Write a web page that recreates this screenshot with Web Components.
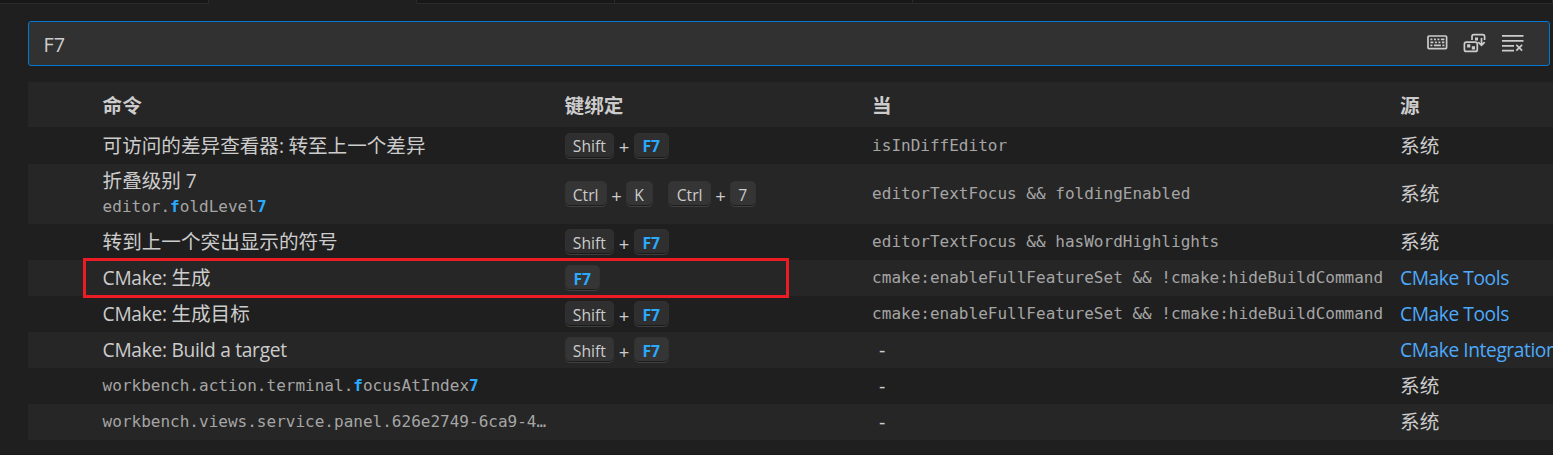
<!DOCTYPE html>
<html lang="zh-CN">
<head>
<meta charset="utf-8">
<title>键盘快捷方式</title>
<style>
html,body{margin:0;height:100%;overflow:hidden;background:#1f1f1f}
body{font-family:"Open Sans","Noto Sans CJK SC",sans-serif;font-size:19.6px;color:#ccc}
</style>
</head>
<body>
<keybindings-editor></keybindings-editor>
<script>
const define=(name,html,setup)=>{
  const t=document.createElement('template');t.innerHTML=html;
  customElements.define(name,class extends HTMLElement{
    constructor(){super();this.attachShadow({mode:'open'}).append(t.content.cloneNode(true));}
    connectedCallback(){if(setup)setup(this);}
  });
};

define('editor-tabs',`<style>
:host{display:flex;height:4px;box-sizing:border-box}
i{box-sizing:border-box;background:#181818;border-right:1px solid #2b2b2b;border-bottom:1px solid #2b2b2b}
.active{background:#1f1f1f;border-bottom-color:#1f1f1f}
</style><i style="width:209px"></i><i class="active" style="width:208px"></i><i style="width:198px"></i><i style="width:298px"></i><i style="flex:1"></i>`);

define('search-box',`<style>
:host{display:flex;align-items:center;box-sizing:border-box;height:45px;margin:17px 3px 16px 28px;padding:0 24.5px 0 14.5px;border:1px solid #0078d4;border-radius:3px;background:#313131}
.q{flex:1;font-size:19.8px;line-height:26px;padding-top:2px}
.actions{display:flex;gap:14px;margin-top:-2px}
svg{display:block;width:24px;height:24px;fill:none;stroke:#ccc;stroke-width:1.7}
</style><div class="q"><slot></slot></div><div class="actions">
<svg viewBox="0 0 24 24"><rect x="3" y="5" width="18.6" height="12.6" rx="1"/><path d="M5.4 8.3h2m1.5 0h2m1.5 0h2m1.5 0h3.5M5.4 11.3h3m1.5 0h2m1.5 0h2m1.5 0h2.5M5.4 14.3h2m1.5 0h7m1.5 0h2"/></svg>
<svg viewBox="0 0 24 24"><path d="M9 9V5.5q0-1.8 1.8-1.8h9q1.8 0 1.8 1.8V9M18.5 7v7.4m-3.2-3.2 3.2 3.2 3.2-3.2"/><rect x="1.4" y="11.2" width="12.9" height="9.2" rx="2"/><path fill="#ccc" stroke="none" d="M4.1 13.2h3.2v3.2H4.1zM8.8 15.2h3.2v3.2H8.8zM12 6.5h3v3h-3z"/></svg>
<svg viewBox="0 0 24 24"><path d="M1 4.8h21.5M1 9.8h21.5M1 14.8h12M1 19.6h12M15.3 13.9l5.8 5.8m0-5.8-5.8 5.8"/></svg>
</div>`);

define('key-cap',`<style>
:host{display:inline-flex;justify-content:center;align-items:center;box-sizing:border-box;height:26px;border:1px solid rgba(51,51,51,.6);border-bottom-color:rgba(68,68,68,.85);border-radius:5px;background:rgba(128,128,128,.17);box-shadow:inset 0 -1px 0 rgba(0,0,0,.45);font-size:16.5px;line-height:22px;color:#ccc}
:host([hit]){color:#2aaaff;font-weight:700}
span{transform:scaleX(.95);padding-top:1px}
</style><span><slot></slot></span>`,el=>el.style.width=el.getAttribute('w')+'px');

define('key-plus',`<style>
:host{display:inline-flex;justify-content:center;width:20px;font-size:18.5px;line-height:24px;padding:3px 0 0 1px;box-sizing:border-box}
:host([tight]){width:19px}
</style>+`);

define('latin-text',`<style>
:host{letter-spacing:-.3px;font-size:19.2px}
:host([link]){letter-spacing:-.43px}
</style><slot></slot>`);

define('code-text',`<style>
:host{display:block;font:16.03px/24px "DejaVu Sans Mono",monospace;color:#a5a5a5;white-space:pre}
::slotted(b){color:#2aaaff}
</style><slot></slot>`);

define('binding-row',`<style>
:host{display:grid;grid-template-columns:462px 307.5px 528px 1fr;align-items:center;height:36px;padding-left:74.6px;line-height:26px;white-space:nowrap;overflow:hidden;box-sizing:border-box}
:host([even]){background:#262626}
:host([tall]){height:60px}
:host([first]){height:37px}
:host([head]){height:45px;font-weight:700;padding-top:2px}
.keys{display:flex;align-items:center}
</style><div><slot name="command"></slot></div><div class="keys"><slot name="keys"></slot></div><div><slot name="when"></slot></div><div><slot name="source"></slot></div>`);

define('selection-frame',`<style>
:host{position:absolute;left:83px;top:258px;width:706px;height:40px;box-sizing:border-box;border:3px solid #ed1c24}
</style>`);

const shiftF7='<key-cap slot="keys" w="49">Shift</key-cap><key-plus slot="keys"></key-plus><key-cap slot="keys" w="35" hit>F7</key-cap>';
const sys='<span slot="source">系统</span>';
const none='<span slot="when" class="none">-</span>';
const cmakeWhen='<code-text slot="when">cmake:enableFullFeatureSet &amp;&amp; !cmake:hideBuildCommand</code-text>';
const link=t=>`<a slot="source"><latin-text link>${t}</latin-text></a>`;

define('keybindings-editor',`<style>
:host{display:block;position:relative;height:100vh;overflow:hidden;box-sizing:border-box;border-bottom:1px solid #1a1819}
.table{margin-left:28px}
a{color:#4daafc}
.none{margin-left:7px}
.wide{display:inline-block;width:15px}
.title{display:block;margin-top:-1px}
.id{padding-top:1px}
</style>
<editor-tabs></editor-tabs>
<search-box>F7</search-box>
<div class="table">
<binding-row head even><span slot="command">命令</span><span slot="keys">键绑定</span><span slot="when">当</span><span slot="source">源</span></binding-row>
<binding-row first><span slot="command">可访问的差异查看器<latin-text>: </latin-text>转至上一个差异</span>${shiftF7}<code-text slot="when">isInDiffEditor</code-text>${sys}</binding-row>
<binding-row tall even><span slot="command" class="title">折叠级别<latin-text> 7</latin-text></span><code-text slot="command" class="id">editor.<b>f</b>oldLevel<b>7</b></code-text><key-cap slot="keys" w="42">Ctrl</key-cap><key-plus slot="keys" tight></key-plus><key-cap slot="keys" w="27">K</key-cap><span slot="keys" class="wide"></span><key-cap slot="keys" w="43">Ctrl</key-cap><key-plus slot="keys" tight></key-plus><key-cap slot="keys" w="26">7</key-cap><code-text slot="when">editorTextFocus &amp;&amp; foldingEnabled</code-text>${sys}</binding-row>
<binding-row><span slot="command">转到上一个突出显示的符号</span>${shiftF7}<code-text slot="when">editorTextFocus &amp;&amp; hasWordHighlights</code-text>${sys}</binding-row>
<binding-row even><span slot="command"><latin-text>CMake: </latin-text>生成</span><key-cap slot="keys" w="35" hit>F7</key-cap>${cmakeWhen}${link('CMake Tools')}</binding-row>
<binding-row><span slot="command"><latin-text>CMake: </latin-text>生成目标</span>${shiftF7}${cmakeWhen}${link('CMake Tools')}</binding-row>
<binding-row even><latin-text slot="command">CMake: Build a target</latin-text>${shiftF7}${none}${link('CMake Integration')}</binding-row>
<binding-row><code-text slot="command">workbench.action.terminal.<b>f</b>ocusAtIndex<b>7</b></code-text>${none}${sys}</binding-row>
<binding-row even><code-text slot="command">workbench.views.service.panel.626e2749-6ca9-4…</code-text>${none}${sys}</binding-row>
</div>
<selection-frame></selection-frame>`);
</script>
</body>
</html>
